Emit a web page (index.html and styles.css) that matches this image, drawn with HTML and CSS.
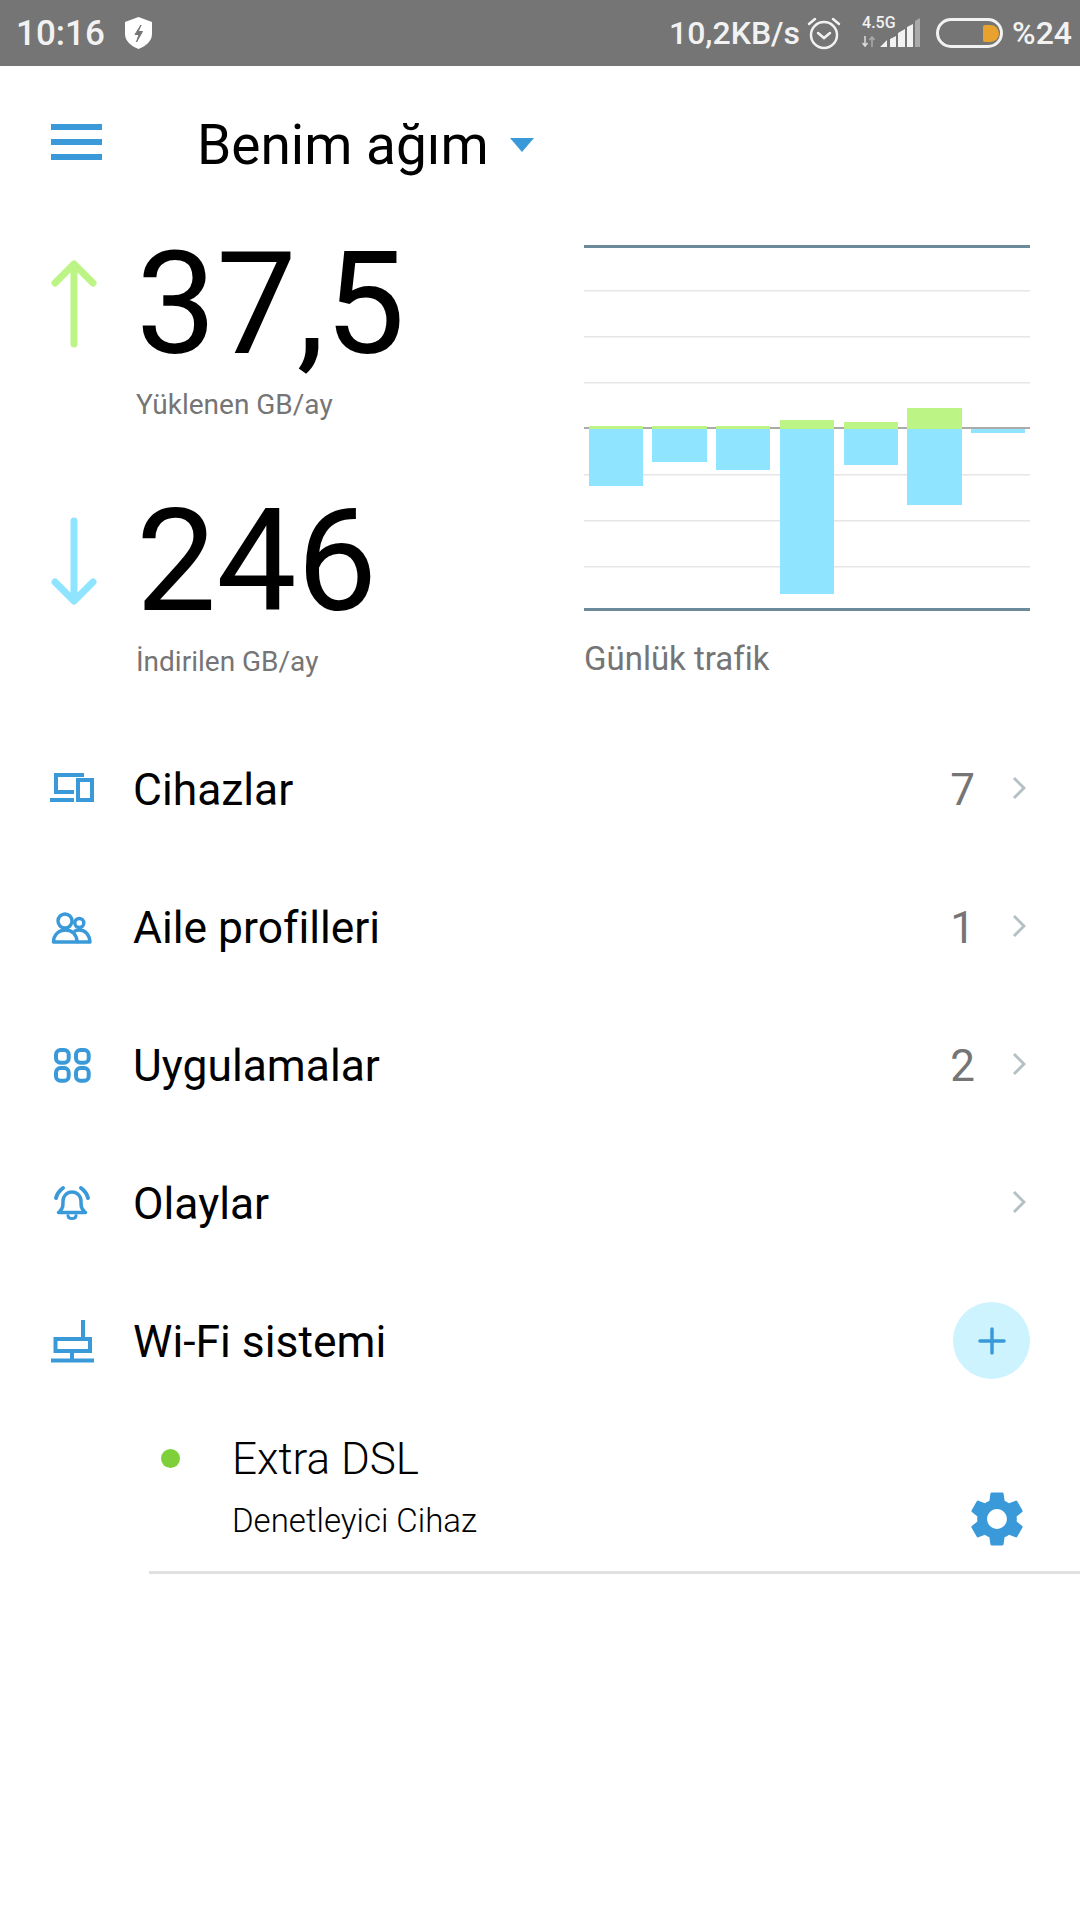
FILE: index.html
```html
<!DOCTYPE html>
<html lang="tr">
<head>
  <meta charset="UTF-8">
  <title>Benim ağım</title>
  <link rel="stylesheet" href="styles.css">
</head>
<body>
  <div class="statusbar">
    <span class="time">10:16</span>
    <svg class="shield" viewBox="0 0 27 32"><path d="M13.500 0 27 5v12c0 7-6 12-13.500 15C6 29 0 24 0 17V5z" fill="#fff"/><path d="M16 8l-6 9.500h4L11.500 25l6-10.500h-4.200z" fill="#757575" stroke="#757575"/></svg>
    <span class="status-right">
      <span class="speed">10,2KB/s</span>
      <svg class="alarm" viewBox="0 0 34 34" fill="none" stroke="#f2f2f2" stroke-width="2.500"><circle cx="17" cy="19" r="13"/><path d="M11 17l6 5 6-5M2 8l6-5M32 8l-6-5" stroke-linecap="round"/></svg>
      <span class="signal">
        <span class="net">4.5G</span>
        <svg class="bars" viewBox="0 0 60 30">
          <path d="M4 18v10M1.500 25l2.500 3 2.500-3" fill="none" stroke="#ddd" stroke-width="1.500"/>
          <path d="M11 29V19M8.500 22l2.500-3 2.500 3" fill="none" stroke="#aaa" stroke-width="1.500"/>
          <path d="M19 29h7v-7zM29 29h6V18l-6 3zM37 29h7V11l-7 4zM46 29h6V6l-6 3z" fill="#f2f2f2"/>
          <path d="M54 29h5V0l-5 3z" fill="#aaa"/>
        </svg>
      </span>
      <span class="battery"><span class="battery-level"></span></span>
      <span class="percent">%24</span>
    </span>
  </div>

  <header class="topbar">
    <div class="hamburger"><i></i><i></i><i></i></div>
    <h1 class="title">Benim ağım</h1>
    <span class="caret"></span>
  </header>

  <section class="summary">
    <div class="stats">
      <div class="stat">
        <svg class="arrow" viewBox="0 0 46 88" fill="none" stroke="#bcf585" stroke-width="7" stroke-linecap="round" stroke-linejoin="round"><path d="M23 84V6M4 23 23 4l19 19"/></svg>
        <div>
          <div class="num">37,5</div>
          <div class="num-label">Yüklenen GB/ay</div>
        </div>
      </div>
      <div class="stat">
        <svg class="arrow" viewBox="0 0 46 88" fill="none" stroke="#8fe4ff" stroke-width="7" stroke-linecap="round" stroke-linejoin="round"><path d="M23 4v78M4 65l19 19 19-19"/></svg>
        <div>
          <div class="num">246</div>
          <div class="num-label">İndirilen GB/ay</div>
        </div>
      </div>
    </div>
    <div class="traffic">
      <svg class="chart" viewBox="0 0 446 366">
        <g fill="#e6e6e6">
          <rect y="45" width="446" height="1.500"/>
          <rect y="91" width="446" height="1.500"/>
          <rect y="137" width="446" height="1.500"/>
          <rect y="229" width="446" height="1.500"/>
          <rect y="275" width="446" height="1.500"/>
          <rect y="321" width="446" height="1.500"/>
        </g>
        <rect y="182" width="446" height="2" fill="#aaa"/>
        <g fill="#bcf585">
          <rect x="5" y="181" width="54" height="3"/>
          <rect x="68" y="181" width="55" height="3"/>
          <rect x="132" y="181" width="54" height="3"/>
          <rect x="196" y="175" width="54" height="9"/>
          <rect x="260" y="177" width="54" height="7"/>
          <rect x="323" y="163" width="55" height="21"/>
        </g>
        <g fill="#8fe4ff">
          <rect x="5" y="184" width="54" height="57"/>
          <rect x="68" y="184" width="55" height="33"/>
          <rect x="132" y="184" width="54" height="41"/>
          <rect x="196" y="184" width="54" height="165"/>
          <rect x="260" y="184" width="54" height="36"/>
          <rect x="323" y="184" width="55" height="76"/>
          <rect x="387" y="184" width="54" height="4"/>
        </g>
        <g fill="#6b8a9a">
          <rect y="0" width="446" height="3"/>
          <rect y="363" width="446" height="3"/>
        </g>
      </svg>
      <div class="chart-label">Günlük trafik</div>
    </div>
  </section>

  <ul class="menu">
    <li class="row">
      <svg class="row-icon" viewBox="0 0 44 44" fill="none" stroke="#3a9ad9" stroke-width="4"><path d="M34 7H6v17h18"/><path d="M0 32h24"/><rect x="28" y="12" width="14" height="20"/></svg>
      <span class="row-name">Cihazlar</span>
      <span class="count">7</span>
      <svg class="chevron" viewBox="0 0 14 24" fill="none" stroke="#b4c0c4" stroke-width="3"><path d="M2 2l10 10L2 22"/></svg>
    </li>
    <li class="row">
      <svg class="row-icon" viewBox="0 0 44 44" fill="none" stroke="#3a9ad9" stroke-width="3.400" stroke-linejoin="round"><circle cx="15" cy="15" r="7"/><circle cx="29.300" cy="17" r="4.500"/><path d="M3.500 36c0-7 5-12 12-12s11.500 5 11.500 12z"/><path d="M24 25.500c1.500-1 3.500-1.500 5.500-1.500 6 0 10 5 10.500 12H27"/></svg>
      <span class="row-name">Aile profilleri</span>
      <span class="count">1</span>
      <svg class="chevron" viewBox="0 0 14 24" fill="none" stroke="#b4c0c4" stroke-width="3"><path d="M2 2l10 10L2 22"/></svg>
    </li>
    <li class="row">
      <svg class="row-icon" viewBox="0 0 44 44" fill="none" stroke="#3a9ad9" stroke-width="4"><rect x="6" y="6" width="12.700" height="12.700" rx="4.500"/><rect x="26" y="6" width="12.700" height="12.700" rx="4.500"/><rect x="6" y="24" width="12.700" height="12.700" rx="4.500"/><rect x="26" y="24" width="12.700" height="12.700" rx="4.500"/></svg>
      <span class="row-name">Uygulamalar</span>
      <span class="count">2</span>
      <svg class="chevron" viewBox="0 0 14 24" fill="none" stroke="#b4c0c4" stroke-width="3"><path d="M2 2l10 10L2 22"/></svg>
    </li>
    <li class="row">
      <svg class="row-icon" viewBox="0 0 44 44" fill="none" stroke="#3a9ad9" stroke-width="3.500" stroke-linecap="round"><path d="M10 29c3-3 3-5 3-10 0-5 4-9 9-9s9 4 9 9c0 5 0 7 3 10"/><path d="M8.500 30.500h27"/><path d="M18 33.500c0 2 2 3 4 3s4-1 4-3" stroke-width="3"/><path d="M6 16c1-4 3-7 7-10M38 16c-1-4-3-7-7-10" stroke-width="4"/></svg>
      <span class="row-name">Olaylar</span>
      <span class="count"></span>
      <svg class="chevron" viewBox="0 0 14 24" fill="none" stroke="#b4c0c4" stroke-width="3"><path d="M2 2l10 10L2 22"/></svg>
    </li>
    <li class="row">
      <svg class="row-icon" viewBox="0 0 44 44" fill="none" stroke="#3a9ad9" stroke-width="4"><path d="M33 0v18"/><rect x="5.500" y="19" width="34.500" height="12"/><path d="M22 33v7M1 40.500h43"/></svg>
      <span class="row-name">Wi-Fi sistemi</span>
      <span class="add-btn">
        <svg class="plus" viewBox="0 0 28 28" stroke="#3a9ad9" stroke-width="3.500" stroke-linecap="round"><path d="M14 2v24M2 14h24"/></svg>
      </span>
    </li>
  </ul>

  <div class="device">
    <div class="device-info">
      <span class="dot"></span>
      <div>
        <div class="device-name">Extra DSL</div>
        <div class="device-role">Denetleyici Cihaz</div>
      </div>
    </div>
    <svg class="gear" viewBox="0 0 24 24"><path fill="#3a9ad9" d="M19.140 12.940c.04-.300.060-.610.060-.940 0-.320-.020-.640-.070-.940l2.030-1.580c.180-.140.230-.410.120-.610l-1.920-3.320c-.120-.220-.370-.290-.590-.220l-2.390.960c-.500-.380-1.030-.700-1.620-.940l-.360-2.540c-.040-.240-.240-.410-.480-.410h-3.840c-.240 0-.430.170-.470.410l-.360 2.540c-.590.240-1.130.570-1.620.940l-2.390-.960c-.220-.080-.470 0-.590.220L2.740 8.870c-.120.210-.080.470.120.610l2.030 1.580c-.050.300-.090.630-.090.940s.020.640.070.940l-2.030 1.580c-.180.140-.230.410-.120.610l1.920 3.320c.120.220.370.290.590.220l2.390-.960c.500.380 1.030.700 1.620.940l.360 2.540c.050.240.240.410.480.410h3.840c.240 0 .440-.170.470-.410l.360-2.540c.590-.240 1.130-.560 1.620-.940l2.390.960c.220.080.470 0 .590-.220l1.920-3.320c.120-.220.070-.470-.120-.610l-2.010-1.580zM12 15.600c-1.980 0-3.600-1.620-3.600-3.600s1.620-3.600 3.600-3.600 3.600 1.620 3.600 3.600-1.620 3.600-3.600 3.600z"/></svg>
  </div>
</body>
</html>
```

FILE: styles.css
```css
* { box-sizing: border-box; }
body { margin: 0; width: 1080px; height: 1920px; background: #fff; font-family: Roboto, sans-serif; color: #000; overflow: hidden; }

.statusbar { height: 66px; background: #757575; color: #f2f2f2; display: flex; align-items: center; padding: 0 8px 0 16px; font-weight: 500; font-size: 32px; }
.time { font-size: 35px; }
.shield { width: 27px; height: 32px; margin-left: 20px; }
.status-right { margin-left: auto; display: flex; align-items: center; }
.alarm { width: 34px; height: 34px; margin-left: 7px; }
.signal { position: relative; width: 60px; height: 30px; margin-left: 20px; }
.net { position: absolute; left: 1px; top: -3px; font-size: 16px; line-height: 16px; }
.bars { display: block; width: 60px; height: 30px; }
.battery { width: 67px; height: 30px; margin-left: 15px; border: 3px solid #f2f2f2; border-radius: 15px; display: flex; justify-content: flex-end; align-items: center; padding: 0 1px; }
.battery-level { width: 16px; height: 17px; background: #e8a22d; border-radius: 2px 9px 9px 2px; }
.percent { margin-left: 9px; }

.topbar { height: 132px; display: flex; align-items: center; padding: 22px 0 0 51px; }
.hamburger { width: 51px; display: flex; flex-direction: column; gap: 9px; margin-top: -3px; }
.hamburger i { display: block; height: 6px; background: #3a9ad9; }
.title { margin: 4px 0 0 95px; font-size: 55px; font-weight: 400; }
.caret { margin: 3px 0 0 21px; border-left: 12.5px solid transparent; border-right: 12.5px solid transparent; border-top: 14px solid #3a9ad9; }

.summary { display: flex; height: 523px; padding-top: 47px; }
.stats { width: 584px; padding: 1px 0 0 51px; }
.stat { display: flex; height: 257px; }
.arrow { width: 46px; height: 88px; margin-top: 14px; flex: none; }
.stat > div { margin-left: 39px; }
.num { font-size: 143px; line-height: 116px; }
.num-label { font-size: 28px; color: #757575; margin-top: 26px; }
.traffic { width: 446px; }
.chart { display: block; width: 446px; height: 366px; }
.chart-label { font-size: 33px; color: #757575; margin-top: 28px; }

.menu { list-style: none; margin: 0; padding: 0 50px; }
.row { height: 138px; display: flex; align-items: center; }
.row-icon { width: 44px; height: 44px; flex: none; }
.row-name { font-size: 44.4px; margin-left: 39px; flex: 1; }
.count { font-size: 44px; color: #757575; margin-right: 37px; }
.chevron { width: 14px; height: 24px; margin: 0 4px 4px 0; }
.add-btn { width: 77px; height: 77px; border-radius: 50%; background: #cdf3ff; display: flex; align-items: center; justify-content: center; margin-bottom: 3px; }
.plus { width: 28px; height: 28px; }

.device { margin-left: 149px; height: 163px; border-bottom: 3px solid #e0e0e0; display: flex; padding: 0 50px 0 0; justify-content: space-between; align-items: flex-end; }
.device-info { display: flex; padding-bottom: 31px; }
.dot { width: 19px; height: 19px; border-radius: 50%; background: #7fcf3a; margin: 16px 0 0 12px; }
.device-name { font-size: 44px; font-weight: 300; margin-left: 52px; }
.device-role { font-size: 33px; font-weight: 300; margin: 16px 0 0 52px; }
.gear { width: 66px; height: 66px; margin-bottom: 19px; }
```
